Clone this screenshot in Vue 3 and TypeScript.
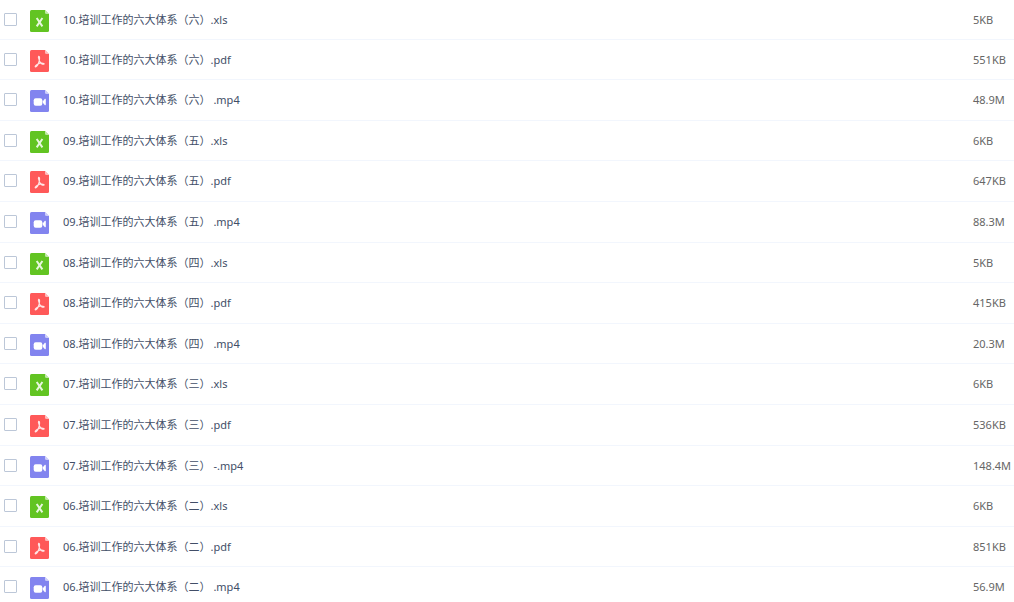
<script setup lang="ts">
import { ref } from 'vue'

type Kind = 'xls' | 'pdf' | 'mp4'

interface FileRow {
  name: string
  kind: Kind
  size: string
}

const files: FileRow[] = [
  { name: '10.培训工作的六大体系（六）.xls', kind: 'xls', size: '5KB' },
  { name: '10.培训工作的六大体系（六）.pdf', kind: 'pdf', size: '551KB' },
  { name: '10.培训工作的六大体系（六） .mp4', kind: 'mp4', size: '48.9M' },
  { name: '09.培训工作的六大体系（五）.xls', kind: 'xls', size: '6KB' },
  { name: '09.培训工作的六大体系（五）.pdf', kind: 'pdf', size: '647KB' },
  { name: '09.培训工作的六大体系（五） .mp4', kind: 'mp4', size: '88.3M' },
  { name: '08.培训工作的六大体系（四）.xls', kind: 'xls', size: '5KB' },
  { name: '08.培训工作的六大体系（四）.pdf', kind: 'pdf', size: '415KB' },
  { name: '08.培训工作的六大体系（四） .mp4', kind: 'mp4', size: '20.3M' },
  { name: '07.培训工作的六大体系（三）.xls', kind: 'xls', size: '6KB' },
  { name: '07.培训工作的六大体系（三）.pdf', kind: 'pdf', size: '536KB' },
  { name: '07.培训工作的六大体系（三） -.mp4', kind: 'mp4', size: '148.4M' },
  { name: '06.培训工作的六大体系（二）.xls', kind: 'xls', size: '6KB' },
  { name: '06.培训工作的六大体系（二）.pdf', kind: 'pdf', size: '851KB' },
  { name: '06.培训工作的六大体系（二） .mp4', kind: 'mp4', size: '56.9M' },
]

const selected = ref<string[]>([])
</script>

<template>
  <table class="files">
    <tbody>
      <tr v-for="(file, i) in files" :key="file.name">
        <td class="pick">
          <input :id="`file-${i}`" v-model="selected" type="checkbox" :value="file.name" />
        </td>
        <td class="type">
          <svg class="icon" :class="file.kind" viewBox="0 0 19 22" aria-hidden="true">
            <path class="sheet" d="M1.5 0H15L19 4V20.5Q19 22 17.5 22H1.5Q0 22 0 20.5V1.5Q0 0 1.5 0Z" />
            <path class="fold" d="M15 0L19 4H16.5Q15 4 15 2.5Z" />
            <path v-if="file.kind === 'xls'" class="stroke bold" d="M6.7 8L12.4 16.4M12.4 8L6.7 16.4" />
            <path
              v-else-if="file.kind === 'pdf'"
              class="stroke"
              d="M8.6 6.4C9.8 6.2 9.8 8.4 9.2 11C8.5 13.6 7 16.4 5.6 17C4.6 17 5.4 15.2 7.4 14.2C9.4 13.3 12.2 12.8 13.9 13.4C14.6 14.2 13 14.7 11.6 13.7C9.8 12.4 8.7 9.4 8.4 7.4Z"
            />
            <template v-else>
              <rect class="solid" x="3.7" y="8.2" width="8.6" height="7.6" rx="2" />
              <path class="solid" d="M12.8 11.2L14.9 8.8Q15.8 8.4 15.8 9.4V14.6Q15.8 15.6 14.9 15.2L12.8 12.8Z" />
            </template>
          </svg>
        </td>
        <td class="name"><label :for="`file-${i}`">{{ file.name }}</label></td>
        <td class="size">{{ file.size }}</td>
      </tr>
    </tbody>
  </table>
</template>

<style>
html {
  scrollbar-width: none;
  background: #fff;
}

body {
  margin: 0;
}
</style>

<style scoped>
.files {
  width: 100%;
  table-layout: fixed;
  border-collapse: separate;
  border-spacing: 0;
  font: 11px/39px "Noto Sans", "Noto Sans CJK SC", sans-serif;
  color: #424e67;
}

td {
  box-sizing: border-box;
  height: 41px;
  padding: 0;
  border-bottom: 1px solid #f2f6fd;
  vertical-align: top;
  white-space: nowrap;
}

tr:is(:nth-child(1), :nth-child(2), :nth-child(4), :nth-child(7), :nth-child(9), :nth-child(12), :nth-child(14)) td {
  height: 40px;
}

.pick {
  width: 30px;
  padding: 13px 0 0 4px;
  line-height: 0;
}

.pick input {
  appearance: none;
  box-sizing: border-box;
  width: 13px;
  height: 13px;
  margin: 0;
  border: 1px solid #bcc7d8;
  border-radius: 1px;
  background: #fff;
}

.pick input:checked {
  border-color: #5b8ff9;
  background: #5b8ff9;
}

.type {
  width: 33px;
  padding-top: 10px;
  line-height: 0;
}

.icon {
  display: block;
  width: 19px;
  height: 22px;
}

.xls {
  color: #62c422;
}

.pdf {
  color: #ff5959;
}

.mp4 {
  color: #8284ef;
}

.sheet {
  fill: currentColor;
}

.fold {
  fill: #fff;
  opacity: 0.6;
}

.stroke {
  fill: none;
  stroke: #fff;
  stroke-width: 1.1;
  stroke-linejoin: round;
  opacity: 0.85;
}

.bold {
  stroke-width: 2;
}

.solid {
  fill: #fff;
}

.size {
  width: 41px;
  color: #666;
}
</style>
